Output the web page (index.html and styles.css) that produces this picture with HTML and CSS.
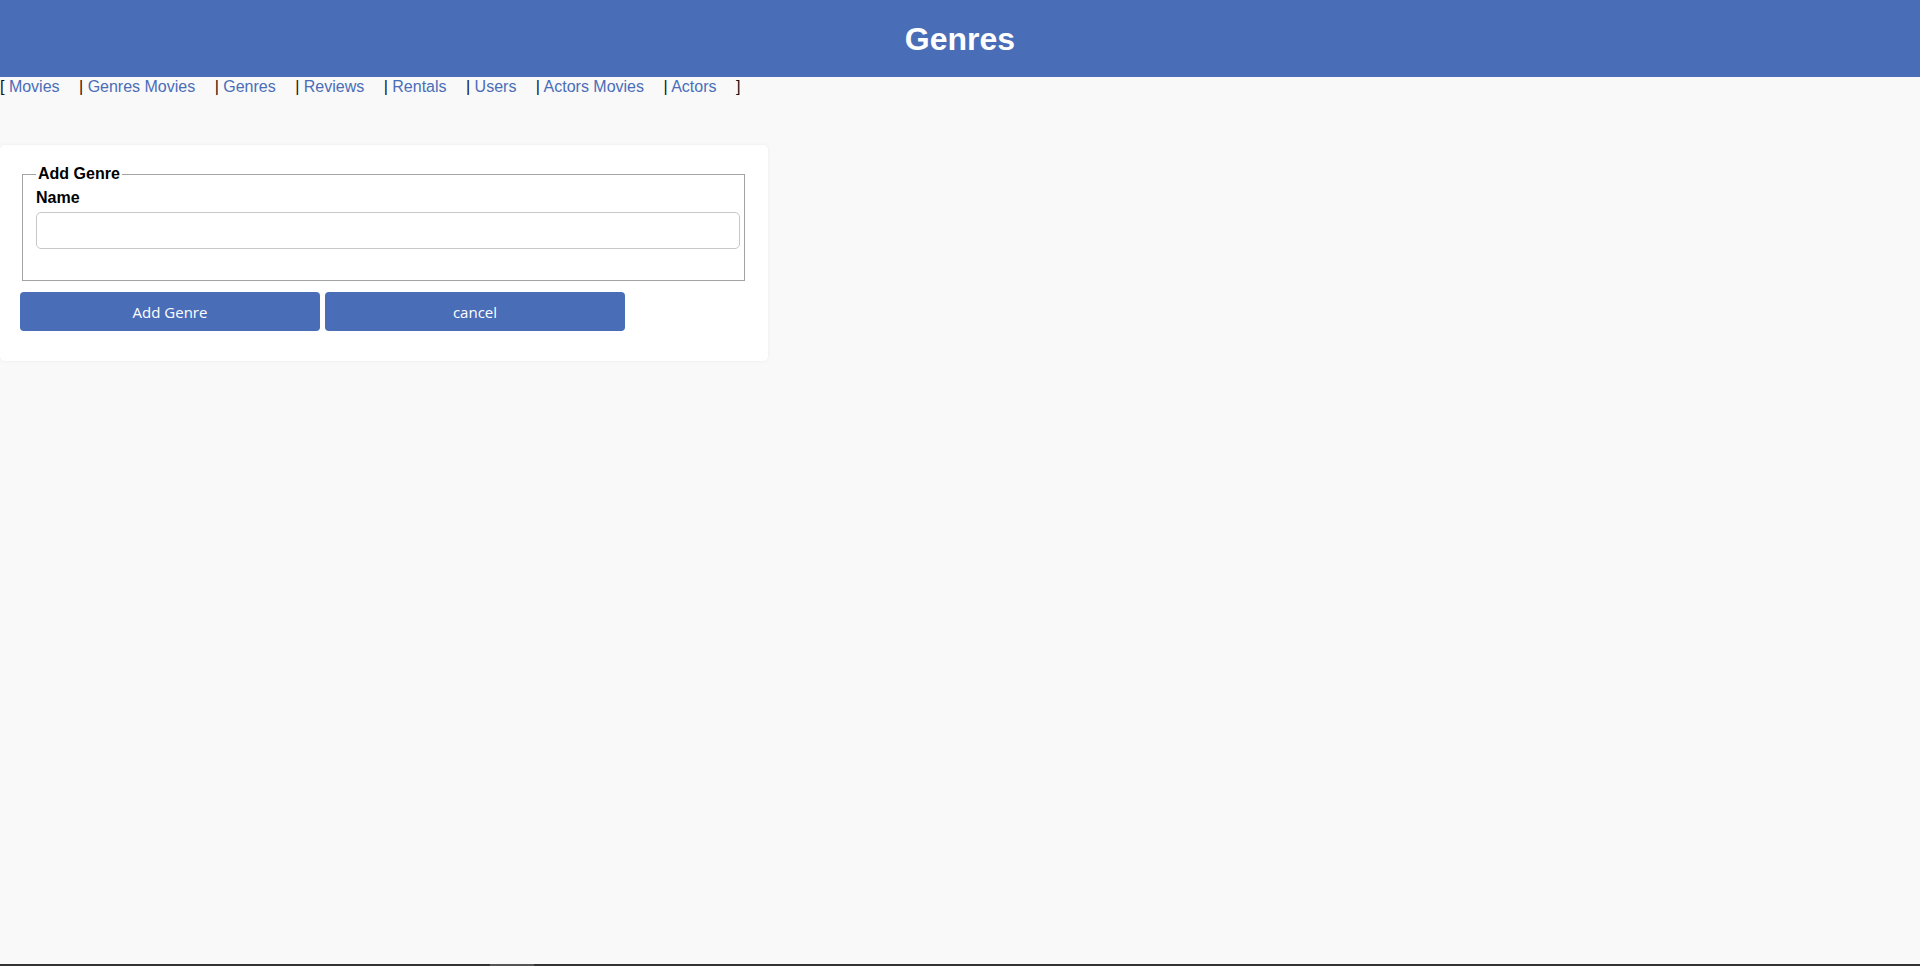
FILE: index.html
```html
<!DOCTYPE html>
<html lang="en">
<head>
<meta charset="utf-8">
<title>Genres</title>
<link rel="stylesheet" href="styles.css">
</head>
<body>
<header class="page-header">
  <h1 class="page-title">Genres</h1>
</header>
<nav class="nav">[ <a class="nav-link" href="#">Movies</a> | <a class="nav-link" href="#">Genres Movies</a> | <a class="nav-link" href="#">Genres</a> | <a class="nav-link" href="#">Reviews</a> | <a class="nav-link" href="#">Rentals</a> | <a class="nav-link" href="#">Users</a> | <a class="nav-link" href="#">Actors Movies</a> | <a class="nav-link" href="#">Actors</a> ]</nav>
<main class="card">
  <form class="form">
    <fieldset class="fieldset">
      <legend class="legend">Add Genre</legend>
      <label class="label" for="name">Name</label>
      <input class="input" id="name" type="text">
    </fieldset>
    <div class="actions"><button class="btn" type="button">Add Genre</button><button class="btn" type="button">cancel</button></div>
  </form>
</main>
<div class="scrollbar"><div class="scrollbar-thumb"></div></div>
</body>
</html>
```
FILE: styles.css
```css
html, body {
  margin: 0;
  padding: 0;
}
body {
  background: #f9f9f9;
  font-family: "Liberation Sans", Arial, sans-serif;
  font-size: 16px;
  color: #000;
  min-height: 966px;
}
.page-header {
  background: #4a6db8;
  height: 77px;
  display: flex;
  align-items: center;
  justify-content: center;
}
.page-title {
  margin: 0;
  color: #fff;
  font-size: 32px;
  font-weight: bold;
  line-height: 1;
  padding-top: 1px;
}
.nav {
  line-height: 18px;
  padding-top: 1px;
  color: #111;
}
.nav-link {
  color: #4a6db8;
  text-decoration: none;
  margin-right: 15px;
}
.card {
  display: block;
  width: 768px;
  box-sizing: border-box;
  margin-top: 49px;
  background: #fff;
  border-radius: 5px;
  box-shadow: 0 0 4px rgba(0, 0, 0, 0.06);
  padding: 20px 20px 30px 20px;
}
.form {
  margin: 0;
}
.fieldset {
  margin: 0 3px 0 2px;
  border: 1px solid #a3a3a3;
  padding: 5px 4px 10px 13px;
}
.legend {
  font-weight: bold;
  padding: 0 2px;
  margin-left: 0;
}
.label {
  display: block;
  font-weight: bold;
  line-height: 18px;
  padding-top: 1px;
}
.input {
  display: block;
  box-sizing: border-box;
  width: 100%;
  height: 37px;
  margin: 5px 0 21px 0;
  border: 1px solid #c8c8c8;
  border-radius: 5px;
  background: #fff;
  font-size: 16px;
  padding: 0 8px;
}
.actions {
  display: flex;
  gap: 5px;
  margin-top: 11px;
}
.btn {
  width: 300px;
  height: 39px;
  background: #4a6db8;
  color: #fff;
  border: none;
  border-radius: 4px;
  font-family: "Open Sans", "Liberation Sans", sans-serif;
  font-size: 15px;
  cursor: pointer;
  padding: 0;
}
.scrollbar {
  position: fixed;
  left: 0;
  right: 0;
  bottom: 0;
  height: 2px;
  background: #333;
}
.scrollbar-thumb {
  margin-left: 490px;
  width: 44px;
  height: 100%;
  background: #555;
}
```
